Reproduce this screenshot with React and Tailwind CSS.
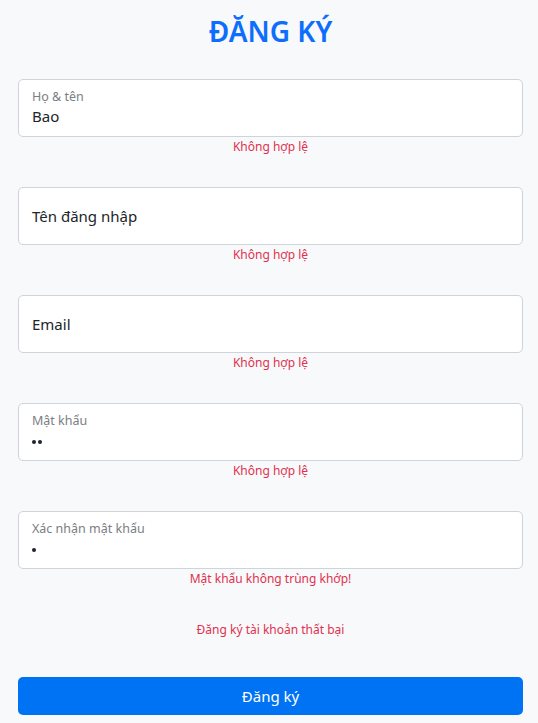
import React from 'react';

const fields = [
  { label: 'Họ & tên', value: 'Bao', error: 'Không hợp lệ' },
  { label: 'Tên đăng nhập', value: '', error: 'Không hợp lệ' },
  { label: 'Email', value: '', error: 'Không hợp lệ' },
  { label: 'Mật khẩu', dots: 2, error: 'Không hợp lệ' },
  { label: 'Xác nhận mật khẩu', dots: 1, error: 'Mật khẩu không trùng khớp!' },
];

function Field({ label, value, dots, error }) {
  const filled = value || dots;
  return (
    <div className="flex flex-col">
      {filled ? (
        <div className="h-[58px] rounded-[5px] border border-[#ced4da] bg-white px-[13px] flex flex-col">
          <span className="mt-[8px] text-[12.5px] leading-[18px] text-[#7a7e83]">{label}</span>
          {dots ? (
            <div className="mt-[10px] flex gap-[2px]">
              {Array.from({ length: dots }).map((_, i) => (
                <span key={i} className="h-[4px] w-[4px] rounded-full bg-[#1b2430]" />
              ))}
            </div>
          ) : (
            <span className="leading-[20px] text-[15px] text-[#212529]">{value}</span>
          )}
        </div>
      ) : (
        <div className="h-[58px] rounded-[5px] border border-[#ced4da] bg-white px-[13px] flex items-center">
          <span className="text-[15px] text-[#212529]">{label}</span>
        </div>
      )}
      <p className="mt-[1px] text-center text-[12px] leading-[18px] text-[#e0314f]">{error}</p>
    </div>
  );
}

export default function App() {
  return (
    <div className="min-h-[723px] bg-[#f8f9fa] pl-[18px] pr-[15px] pb-2 font-['Noto_Sans',sans-serif]">
      <h1 className="pt-[13px] text-center text-[28px] leading-[36px] font-semibold text-[#0d6efd]">ĐĂNG KÝ</h1>

      <form className="mt-[30px] flex flex-col gap-[31px]" onSubmit={(e) => e.preventDefault()}>
        {fields.map((f) => (
          <Field key={f.label} {...f} />
        ))}
      </form>

      <p className="mt-[33px] text-center text-[12px] leading-[18px] text-[#e0314f]">Đăng ký tài khoản thất bại</p>

      <button className="mt-[38px] h-[38px] w-full rounded-[5px] bg-[#0073f5] text-[15px] text-white">
        Đăng ký
      </button>
    </div>
  );
}
